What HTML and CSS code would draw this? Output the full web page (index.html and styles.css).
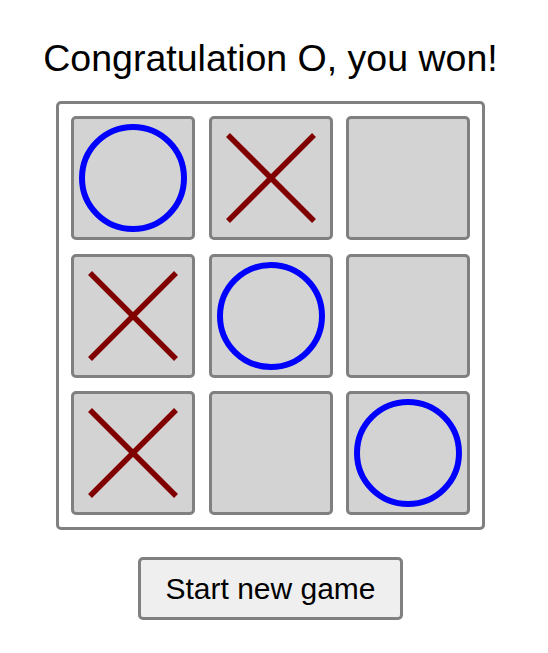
FILE: index.html
```html
<!DOCTYPE html>
<html>
<head>
<meta charset="utf-8">
<link rel="stylesheet" href="styles.css">
</head>
<body>
<div class="app">
  <h1 class="title">Congratulation O, you won!</h1>
  <div class="board">
    <div class="cell"><svg viewBox="0 0 118 118"><circle cx="59" cy="59" r="51" class="o"/></svg></div>
    <div class="cell"><svg viewBox="0 0 118 118"><line x1="16" y1="16" x2="102" y2="102" class="x"/><line x1="102" y1="16" x2="16" y2="102" class="x"/></svg></div>
    <div class="cell"></div>
    <div class="cell"><svg viewBox="0 0 118 118"><line x1="16" y1="16" x2="102" y2="102" class="x"/><line x1="102" y1="16" x2="16" y2="102" class="x"/></svg></div>
    <div class="cell"><svg viewBox="0 0 118 118"><circle cx="59" cy="59" r="51" class="o"/></svg></div>
    <div class="cell"></div>
    <div class="cell"><svg viewBox="0 0 118 118"><line x1="16" y1="16" x2="102" y2="102" class="x"/><line x1="102" y1="16" x2="16" y2="102" class="x"/></svg></div>
    <div class="cell"></div>
    <div class="cell"><svg viewBox="0 0 118 118"><circle cx="59" cy="59" r="51" class="o"/></svg></div>
  </div>
  <button class="btn">Start new game</button>
</div>
</body>
</html>
```
FILE: styles.css
```css
html, body {
  margin: 0;
  padding: 0;
  background: #fff;
}
.app {
  display: flex;
  flex-direction: column;
  align-items: center;
  font-family: "Liberation Sans", Arial, sans-serif;
  padding: 38px 7px 0 0;
}
.title {
  margin: 0;
  font-size: 37.5px;
  font-weight: normal;
  line-height: 40px;
  color: #000;
}
.board {
  margin-top: 23px;
  box-sizing: border-box;
  width: 429px;
  padding: 12px;
  border: 3px solid #808080;
  border-radius: 5px;
  display: grid;
  grid-template-columns: repeat(3, 124px);
  grid-auto-rows: 124px;
  gap: 13.5px;
}
.cell {
  box-sizing: border-box;
  border: 3px solid #808080;
  border-radius: 5px;
  background: #d3d3d3;
}
.cell svg {
  display: block;
  width: 118px;
  height: 118px;
}
.o {
  fill: none;
  stroke: #0000ff;
  stroke-width: 6;
}
.x {
  stroke: #800000;
  stroke-width: 5.5;
}
.btn {
  margin-top: 27px;
  box-sizing: border-box;
  width: 265px;
  height: 63px;
  border: 3px solid #808080;
  border-radius: 5px;
  background: #efefef;
  font-family: "Liberation Sans", Arial, sans-serif;
  font-size: 30px;
  color: #000;
  padding: 0;
}
```
